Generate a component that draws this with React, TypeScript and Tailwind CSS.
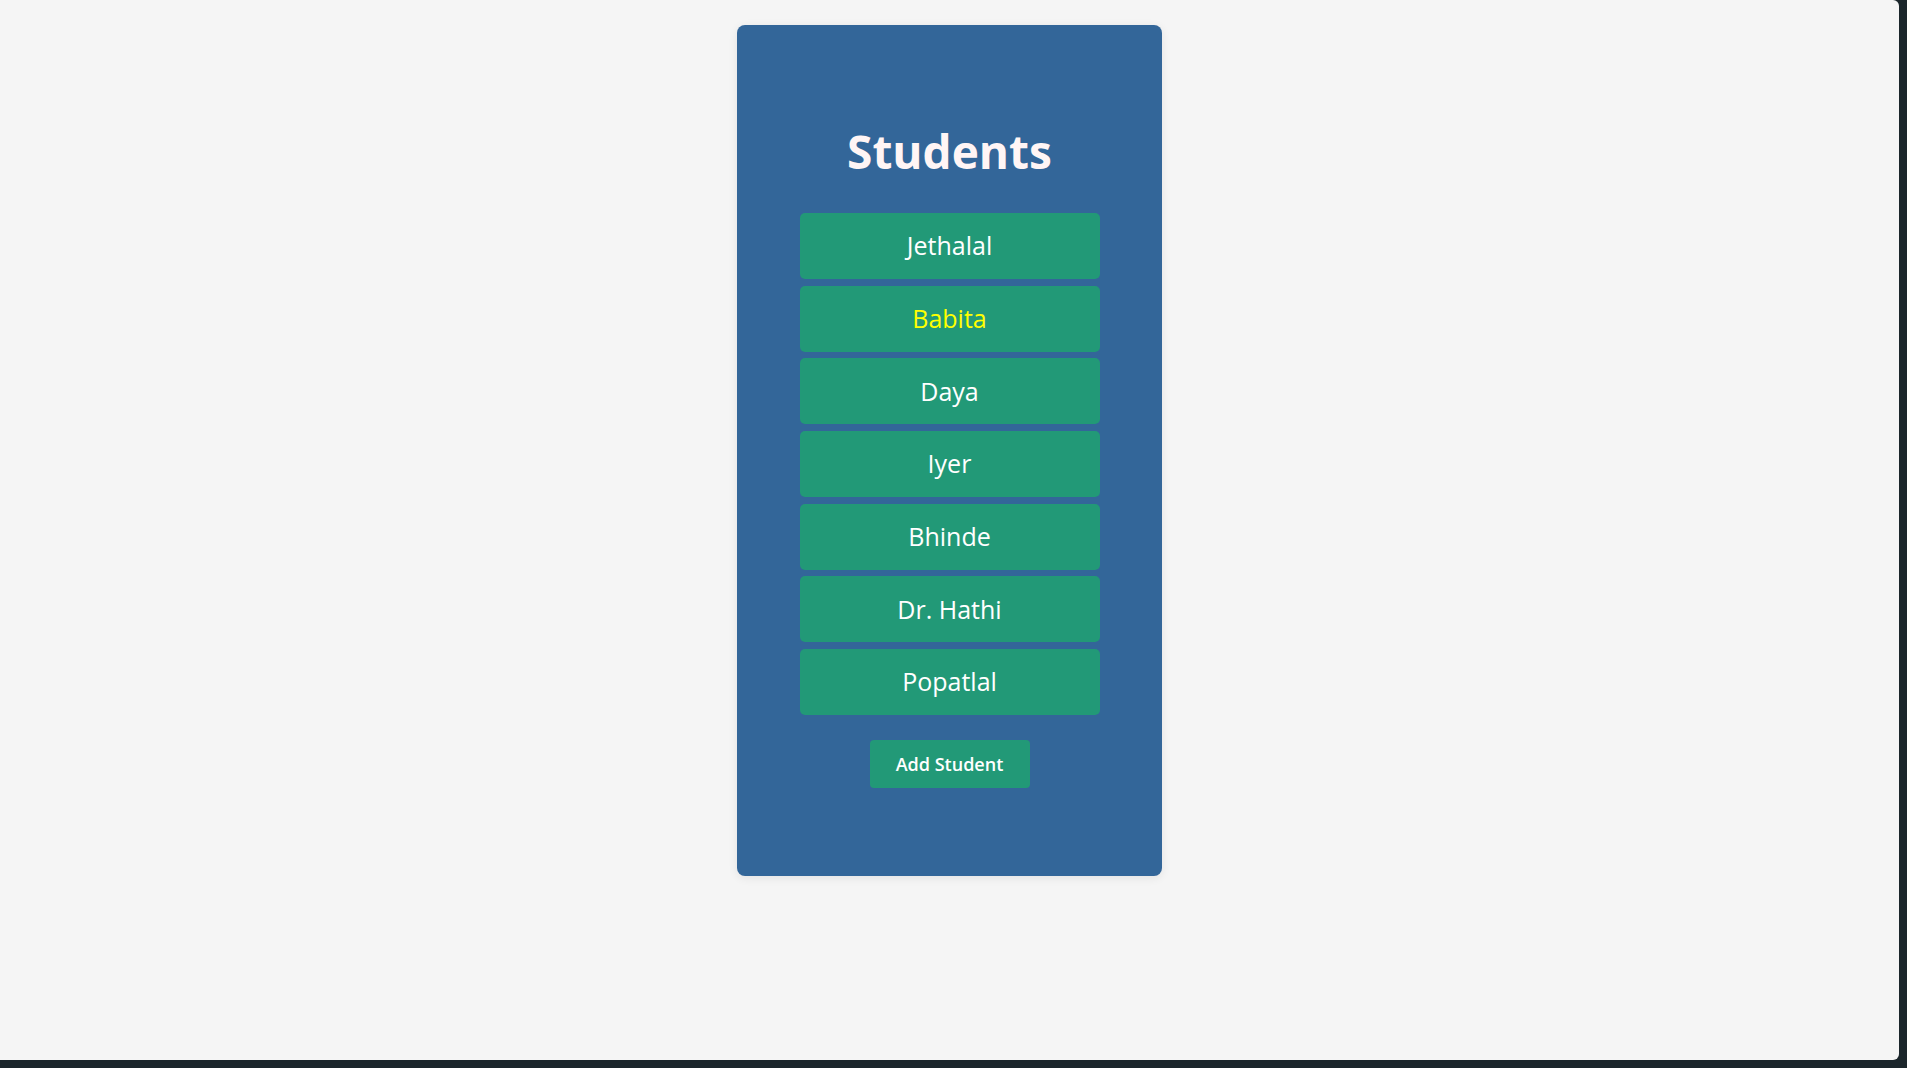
const students = ['Jethalal', 'Babita', 'Daya', 'Iyer', 'Bhinde', 'Dr. Hathi', 'Popatlal'];

export default function App() {
  return (
    <div className="h-[1068px] w-[1907px] overflow-hidden bg-[#1b262b]">
      <div
        className="flex h-[1060px] w-[1899px] justify-center rounded-br-[6px] rounded-tr-[6px] bg-[#f5f5f5]"
        style={{ fontFamily: '"Open Sans", "Liberation Sans", sans-serif' }}
      >
        <div className="mt-[25px] flex h-[851px] w-[425px] flex-col items-center rounded-[8px] bg-[#336699] shadow-[0_2px_10px_rgba(0,0,0,0.08)]">
          <h1 className="mt-[96px] text-[46px] leading-[60px] font-bold text-[#fff5f5]">Students</h1>
          <div className="mt-[32px] flex flex-col gap-[6.7px]">
            {students.map((name) => (
              <div
                key={name}
                className={`flex h-[66px] w-[300px] items-center justify-center rounded-[5px] bg-[#229977] text-[25px] ${
                  name === 'Babita' ? 'text-[#ffff00]' : 'text-white'
                }`}
              >
                {name}
              </div>
            ))}
          </div>
          <button className="mt-[25px] h-[48px] w-[160px] rounded-[4px] bg-[#229977] text-[18px] font-semibold text-white">
            Add Student
          </button>
        </div>
      </div>
    </div>
  );
}
